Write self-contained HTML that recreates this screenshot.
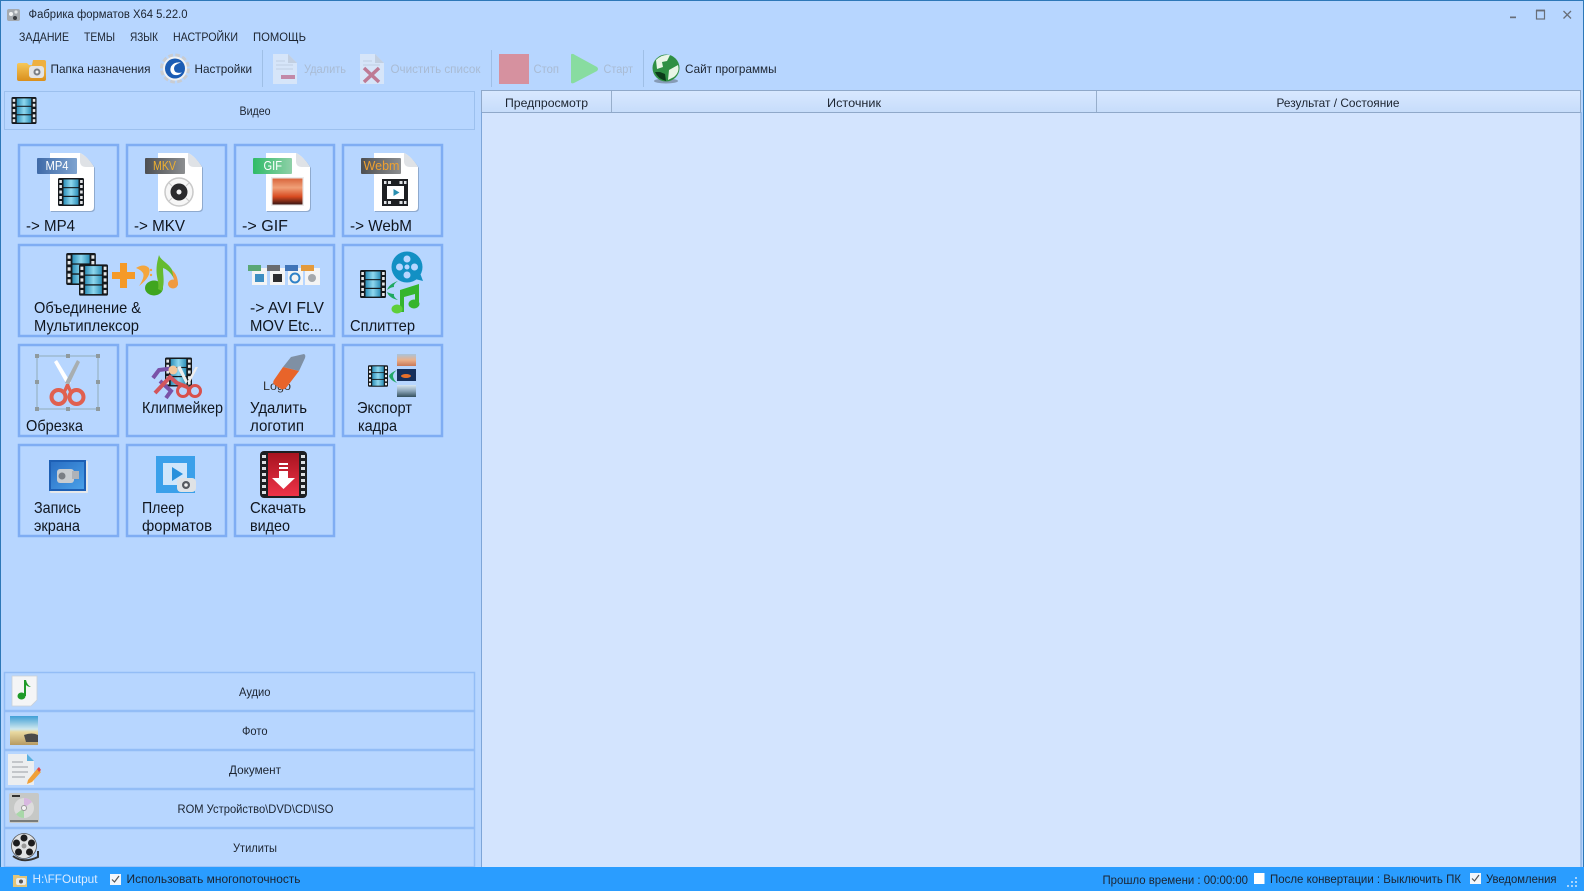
<!DOCTYPE html>
<html lang="ru"><head><meta charset="utf-8"><title>Фабрика форматов</title>
<style>
html,body{margin:0;padding:0;width:1584px;height:891px;overflow:hidden;background:#b7d6ff}
svg{display:block;filter:blur(.3px)}
text{font-family:"Liberation Sans",sans-serif;font-size:12px;fill:#1c2430}
.b{font-size:16px;fill:#10161f}
.g{fill:#a9bbd3}
.tile{fill:none;stroke:#7fadf3;stroke-width:2.5}
.hd{fill:none;stroke:#93bdf6;stroke-width:1.5}
.hv{fill:none;stroke:#9cc0ee;stroke-width:1}
.tg{font-size:12.5px;fill:#fff}
</style></head><body>
<svg width="1584" height="891" viewBox="0 0 1584 891" xmlns="http://www.w3.org/2000/svg">
<defs>
<linearGradient id="fb" x1="0" x2="1" y1="0" y2="0"><stop offset="0" stop-color="#2d8fb8"/><stop offset=".5" stop-color="#8fd8ef"/><stop offset="1" stop-color="#2d8fb8"/></linearGradient>
<linearGradient id="hdr" x1="0" x2="0" y1="0" y2="1"><stop offset="0" stop-color="#d8e8ff"/><stop offset="1" stop-color="#c6dcfa"/></linearGradient>
<linearGradient id="sun" x1="0" x2="0" y1="0" y2="1"><stop offset="0" stop-color="#d9653c"/><stop offset=".35" stop-color="#f0a078"/><stop offset=".7" stop-color="#d84a20"/><stop offset="1" stop-color="#3a1512"/></linearGradient>
<linearGradient id="sky" x1="0" x2="0" y1="0" y2="1"><stop offset="0" stop-color="#3f9fd6"/><stop offset=".45" stop-color="#cfe8ee"/><stop offset=".55" stop-color="#e9d9a0"/><stop offset="1" stop-color="#b69a62"/></linearGradient>
<linearGradient id="blu" x1="0" x2="1"><stop offset="0" stop-color="#3f6aa8"/><stop offset="1" stop-color="#7ea3cf"/></linearGradient>
<linearGradient id="dk" x1="0" x2="1"><stop offset="0" stop-color="#4d4f52"/><stop offset="1" stop-color="#8c8e90"/></linearGradient>
<linearGradient id="grn" x1="0" x2="1"><stop offset="0" stop-color="#2fbb68"/><stop offset="1" stop-color="#8fd0a8"/></linearGradient>
<linearGradient id="fold" x1="0" x2="0" y1="0" y2="1"><stop offset="0" stop-color="#f6c85a"/><stop offset="1" stop-color="#d98f1c"/></linearGradient>
<linearGradient id="redg" x1="0" x2="0" y1="0" y2="1"><stop offset="0" stop-color="#a81420"/><stop offset="1" stop-color="#ee3348"/></linearGradient>
<linearGradient id="pic1" x1="0" x2="0" y1="0" y2="1"><stop offset="0" stop-color="#a8c4dc"/><stop offset=".5" stop-color="#eab08a"/><stop offset="1" stop-color="#c87858"/></linearGradient>
<linearGradient id="pic3" x1="0" x2="0" y1="0" y2="1"><stop offset="0" stop-color="#d6e6f0"/><stop offset=".5" stop-color="#8aa4b8"/><stop offset="1" stop-color="#34505e"/></linearGradient>
<linearGradient id="rec" x1="0" x2="1" y1="0" y2="1"><stop offset="0" stop-color="#2a6fc4"/><stop offset="1" stop-color="#4aa0e8"/></linearGradient>
<symbol id="film" viewBox="0 0 26 28">
<rect width="26" height="28" rx="1.5" fill="#15191d"/>
<rect x="5.5" y="1.5" width="15" height="7.6" fill="url(#fb)"/><rect x="5.5" y="10.2" width="15" height="7.6" fill="url(#fb)"/><rect x="5.5" y="19" width="15" height="7.6" fill="url(#fb)"/>
<g fill="#e6e8ea"><rect x="1.3" y="2" width="2.6" height="3"/><rect x="1.3" y="7" width="2.6" height="3"/><rect x="1.3" y="12.5" width="2.6" height="3"/><rect x="1.3" y="18" width="2.6" height="3"/><rect x="1.3" y="23" width="2.6" height="3"/><rect x="22.1" y="2" width="2.6" height="3"/><rect x="22.1" y="7" width="2.6" height="3"/><rect x="22.1" y="12.5" width="2.6" height="3"/><rect x="22.1" y="18" width="2.6" height="3"/><rect x="22.1" y="23" width="2.6" height="3"/></g>
</symbol>
<symbol id="doc" viewBox="0 0 45 60"><path d="M0 0H30Q37 3 44 14V54Q44 58 40 58H0Z" fill="#6f86a6" opacity=".55" transform="translate(1 1)"/><path d="M0 0H30Q37 3 44 14V54Q44 58 40 58H0Z" fill="#fff"/><path d="M30 0Q37 3 44 14H36Q30 14 30 8Z" fill="#dfe2e6"/></symbol>
</defs>

<!-- window -->
<rect width="1584" height="891" fill="#b7d6ff"/>
<rect x=".5" y=".5" width="1583" height="890" fill="none" stroke="#2d78b8"/>

<!-- title bar -->
<g><rect x="7" y="9" width="13" height="12" rx="2" fill="#a4a9af"/><circle cx="11" cy="14" r="2" fill="#f2f3f4"/><circle cx="16" cy="12" r="1.6" fill="#e4e6e8"/><circle cx="15" cy="18" r="2" fill="#3a3d42"/></g>
<text x="28.5" y="18" textLength="159" lengthAdjust="spacingAndGlyphs" style="font-size:11.5px">Фабрика форматов X64 5.22.0</text>
<path d="M1510 16.5h6v1.7h-6z" fill="#686e78"/>
<rect x="1536.5" y="10.5" width="8" height="8.5" fill="none" stroke="#686e78" stroke-width="1.2"/><path d="M1536 10.5h9" stroke="#686e78" stroke-width="1.8"/>
<path d="M1563.5 11l7.5 7.5m0-7.5l-7.5 7.5" stroke="#686e78" stroke-width="1.3" fill="none"/>

<!-- menu -->
<text x="19" y="41" textLength="50" lengthAdjust="spacingAndGlyphs">ЗАДАНИЕ</text>
<text x="84" y="41" textLength="31" lengthAdjust="spacingAndGlyphs">ТЕМЫ</text>
<text x="130" y="41" textLength="28" lengthAdjust="spacingAndGlyphs">ЯЗЫК</text>
<text x="173" y="41" textLength="65" lengthAdjust="spacingAndGlyphs">НАСТРОЙКИ</text>
<text x="253" y="41" textLength="53" lengthAdjust="spacingAndGlyphs">ПОМОЩЬ</text>

<!-- toolbar -->
<path d="M17 65q0-2 2-2h8l2 2h15q2 0 2 2v12q0 2-2 2H19q-2 0-2-2z" fill="url(#fold)"/><path d="M33 60h11q2 0 2 2v8H31z" fill="#eeb040"/>
<rect x="29" y="66" width="15" height="12" rx="3" fill="#e2e4e6"/><circle cx="37" cy="72" r="3.500" fill="#7a7e84"/><circle cx="37" cy="72" r="1.500" fill="#f4f4f4"/>
<text x="50.500" y="73" textLength="100" lengthAdjust="spacingAndGlyphs">Папка назначения</text>
<g transform="translate(175 68.500)"><circle r="13" fill="none" stroke="#c8ccd2" stroke-width="4" stroke-dasharray="4.500 2.300"/><circle r="12" fill="#f0f2f4"/><circle r="10" fill="#1b5cb4"/><path d="M6-6A8.500 8.500 0 1 0 7 4Q3 7-1 5-5 2-3-3-1-7 6-6z" fill="#1b5cb4"/><path d="M6-6Q-1-7-4-2-6 3-2 6 3 8 7 4 2 5 0 3-2 0 0-3 2-5 6-6z" fill="#fff"/></g>
<text x="194.500" y="73" textLength="57.500" lengthAdjust="spacingAndGlyphs">Настройки</text>
<path d="M262.500 50v37" stroke="#9fbfe6"/>
<g opacity=".65"><path d="M273 54h15l9 9v21h-24z" fill="#e8eef6"/><path d="M288 54v9h9z" fill="#c8ccd2"/><path d="M276 61h9M276 65h17M276 69h17" stroke="#c6ccd4"/><rect x="281" y="75" width="14" height="4" fill="#c8607a"/></g>
<text x="304" y="73" textLength="42" lengthAdjust="spacingAndGlyphs" class="g">Удалить</text>
<g opacity=".65"><path d="M360 54h15l9 9v21h-24z" fill="#e8eef6"/><path d="M375 54v9h9z" fill="#c8ccd2"/><path d="M363 61h9M363 65h17" stroke="#c6ccd4"/><path d="M364 68l15 14m0-14l-15 14" stroke="#c2495c" stroke-width="3.500"/></g>
<text x="390.500" y="73" textLength="90" lengthAdjust="spacingAndGlyphs" class="g">Очистить список</text>
<path d="M491.500 50v37" stroke="#9fbfe6"/>
<rect x="499" y="54" width="30" height="30" fill="#d6919f"/>
<text x="533.500" y="73" textLength="25.500" lengthAdjust="spacingAndGlyphs" class="g">Стоп</text>
<path d="M572 54q-1-.5-1 2v26q0 2 3 1l23-12q2-2 0-4L575 55q-2-1.500-3-1z" fill="#88dca0"/>
<text x="603.500" y="73" textLength="29.500" lengthAdjust="spacingAndGlyphs" class="g">Старт</text>
<path d="M643.500 50v37" stroke="#9fbfe6"/>
<ellipse cx="666" cy="81" rx="12" ry="2.500" fill="#55606e" opacity=".5"/>
<circle cx="666" cy="68" r="13.500" fill="#2f8f44"/><path d="M656 60q6-6 14-5l-3 6-5 1 1 5-6 2zM669 70l9-5q2 7-4 12l-6 3z" fill="#e8f5e6"/><path d="M655 72q3 7 11 9l-1-7-5-2z" fill="#0c3a1a"/>
<text x="685" y="73" textLength="91.500" lengthAdjust="spacingAndGlyphs">Сайт программы</text>

<!-- left panel headers -->
<rect x="4.500" y="91.500" width="470" height="38" class="hv"/>
<use href="#film" x="11" y="97" width="26" height="27"/>
<text x="239.500" y="115" textLength="31" lengthAdjust="spacingAndGlyphs">Видео</text>

<!-- tiles -->
<rect x="19" y="145" width="99" height="91" class="tile"/><rect x="127" y="145" width="99" height="91" class="tile"/><rect x="235" y="145" width="99" height="91" class="tile"/><rect x="343" y="145" width="99" height="91" class="tile"/>
<rect x="19" y="245" width="207" height="91" class="tile"/><rect x="235" y="245" width="99" height="91" class="tile"/><rect x="343" y="245" width="99" height="91" class="tile"/>
<rect x="19" y="345" width="99" height="91" class="tile"/><rect x="127" y="345" width="99" height="91" class="tile"/><rect x="235" y="345" width="99" height="91" class="tile"/><rect x="343" y="345" width="99" height="91" class="tile"/>
<rect x="19" y="445" width="99" height="91" class="tile"/><rect x="127" y="445" width="99" height="91" class="tile"/><rect x="235" y="445" width="99" height="91" class="tile"/>

<!-- MP4 -->
<use href="#doc" x="50" y="153" width="45" height="60"/>
<rect x="37" y="158" width="40" height="16" rx="1" fill="url(#blu)"/><text x="45.500" y="170" class="tg" textLength="23" lengthAdjust="spacingAndGlyphs">MP4</text>
<use href="#film" x="58" y="178" width="26" height="28"/>
<text x="26" y="231" class="b" textLength="49" lengthAdjust="spacingAndGlyphs">-&gt; MP4</text>
<!-- MKV -->
<use href="#doc" x="158" y="153" width="45" height="60"/>
<rect x="145" y="158" width="40" height="16" rx="1" fill="url(#dk)"/><text x="153" y="170" class="tg" style="fill:#eeb030" textLength="23" lengthAdjust="spacingAndGlyphs">MKV</text>
<circle cx="179" cy="192" r="14" fill="#f6f6f6" stroke="#c9c9c9" stroke-width="1.500"/><circle cx="179" cy="192" r="8.500" fill="#2a2a2c"/><circle cx="179" cy="192" r="2.500" fill="#f2f2f2"/><path d="M169 183l3 3M189 183l-3 3M169 201l3-3M189 201l-3-3" stroke="#c9c9c9"/>
<text x="134" y="231" class="b" textLength="51" lengthAdjust="spacingAndGlyphs">-&gt; MKV</text>
<!-- GIF -->
<use href="#doc" x="266" y="153" width="45" height="60"/>
<rect x="253" y="158" width="39" height="16" rx="1" fill="url(#grn)"/><text x="263.500" y="170" class="tg" textLength="18.500" lengthAdjust="spacingAndGlyphs">GIF</text>
<rect x="271" y="177" width="33" height="29" fill="#ececec"/><rect x="272.500" y="178.500" width="30" height="26" fill="url(#sun)"/>
<text x="242" y="231" class="b" textLength="46" lengthAdjust="spacingAndGlyphs">-&gt; GIF</text>
<!-- WebM -->
<use href="#doc" x="374" y="153" width="45" height="60"/>
<rect x="361" y="158" width="40" height="16" rx="1" fill="url(#dk)"/><text x="363.500" y="170" class="tg" style="fill:#eea030" textLength="36" lengthAdjust="spacingAndGlyphs">Webm</text>
<path d="M382 179h26v27h-26z" fill="#1d1f22"/><rect x="387" y="186" width="17" height="13" fill="#fff"/><path d="M393.500 189l6 3.500-6 3.500z" fill="#2a8fb0"/><path d="M384 181h2.500v3H384zM404 181h2.500v3H404zM384 201h2.500v3H384zM404 201h2.500v3H404zM388 181h3v3h-3zM399.500 181h3v3h-3zM388 201h3v3h-3zM399.500 201h3v3h-3z" fill="#dfe2e5"/>
<text x="350" y="231" class="b" textLength="62" lengthAdjust="spacingAndGlyphs">-&gt; WebM</text>

<!-- Merge -->
<use href="#film" x="66" y="253" width="30" height="32"/>
<use href="#film" x="79" y="264" width="29" height="32"/>
<path d="M120 263h7v9h8v7h-8v9h-7v-9h-8v-7h8z" fill="#f59a28"/>
<path d="M136 268q8-5 13 0 3 8-10 18 6-9 4-13-2-3-7-5z" fill="#f4a63e"/><circle cx="151" cy="270" r="1.200" fill="#f4a63e"/><circle cx="151" cy="275" r="1.200" fill="#f4a63e"/>
<ellipse cx="154" cy="288" rx="9" ry="7.500" fill="#3fa51f"/><path d="M158 289c2-9-5-14 1-34 2 7 16 10 15 24-3-7-8-10-11-11 0 8 2 14-1 23z" fill="#65bb30"/>
<ellipse cx="173" cy="284" rx="5" ry="4.500" fill="#f09a40"/><path d="M175 285l-3-15q6 5 6 15z" fill="#f09a40"/>
<text x="34" y="313" class="b" textLength="107" lengthAdjust="spacingAndGlyphs">Объединение &amp;</text>
<text x="34" y="331" class="b" textLength="105" lengthAdjust="spacingAndGlyphs">Мультиплексор</text>

<!-- AVI etc -->
<g>
<rect x="252" y="268" width="15" height="17" fill="#f4f4f4"/><rect x="248" y="265" width="13" height="6" fill="#5aa776"/><rect x="255" y="274" width="9" height="8" fill="#3d8ec2"/>
<rect x="270" y="268" width="15" height="17" fill="#f4f4f4"/><rect x="267" y="265" width="13" height="6" fill="#6a6c70"/><rect x="273" y="274" width="9" height="8" fill="#2c2c2e"/>
<rect x="288" y="268" width="15" height="17" fill="#f4f4f4"/><rect x="285" y="265" width="13" height="6" fill="#3f74b8"/><circle cx="295" cy="278" r="4.500" fill="none" stroke="#2f82c8" stroke-width="2"/>
<rect x="305" y="268" width="15" height="17" fill="#f4f4f4"/><rect x="301" y="265" width="13" height="6" fill="#e39a3c"/><circle cx="312" cy="278" r="4" fill="#a4a8ac"/>
</g>
<text x="250" y="313" class="b" textLength="74" lengthAdjust="spacingAndGlyphs">-&gt; AVI FLV</text>
<text x="250" y="331" class="b" textLength="72" lengthAdjust="spacingAndGlyphs">MOV Etc...</text>

<!-- Splitter -->
<use href="#film" x="360" y="270" width="26" height="28"/>
<path d="M398 281q-9 3-11 9 4-3 7-3-1-3 4-6zM398 300q-9-2-11-8 4 2 7 2-1 3 4 6z" fill="#1fa860"/>
<circle cx="407" cy="267" r="15.500" fill="#1290c4"/><path d="M415 279l8 2-3-8z" fill="#1290c4"/><g fill="#b7d6ff"><circle cx="407" cy="267" r="2.500"/><circle cx="407" cy="259" r="3.500"/><circle cx="407" cy="275" r="3.500"/><circle cx="399.500" cy="267" r="3.500"/><circle cx="414.500" cy="267" r="3.500"/></g>
<path d="M400 290l19-6v22h-4v-12l-11 3v15h-4z" fill="#35b52d"/><ellipse cx="397" cy="309" rx="5.500" ry="4.500" fill="#5fcf3a"/><ellipse cx="414" cy="304" rx="5.500" ry="4.500" fill="#35b52d"/>
<text x="350" y="331" class="b" textLength="65" lengthAdjust="spacingAndGlyphs">Сплиттер</text>

<!-- Crop -->
<rect x="37" y="356" width="61" height="53" fill="none" stroke="#92acb8" stroke-width="1"/>
<g fill="#8f9a9e"><rect x="35" y="354" width="4" height="4"/><rect x="66" y="354" width="4" height="4"/><rect x="96" y="354" width="4" height="4"/><rect x="35" y="380" width="4" height="4"/><rect x="96" y="380" width="4" height="4"/><rect x="35" y="407" width="4" height="4"/><rect x="66" y="407" width="4" height="4"/><rect x="96" y="407" width="4" height="4"/></g>
<path d="M54 362l13 23 4-2-14-23z" fill="#fff"/><path d="M80 362l-11 23-4-2 12-23z" fill="#a8aeb0"/>
<circle cx="58.500" cy="397" r="7" fill="none" stroke="#e0604f" stroke-width="4"/><circle cx="76.500" cy="397" r="7" fill="none" stroke="#e0604f" stroke-width="4"/><path d="M63 391l3-7 3 0 3 7-3 1-1.500-3-1.500 3z" fill="#e0604f"/>
<text x="26" y="431" class="b" textLength="57" lengthAdjust="spacingAndGlyphs">Обрезка</text>

<!-- Clipmaker -->
<use href="#film" x="165" y="356" width="27" height="32"/>
<path d="M175 368l-16 2-6 8" fill="none" stroke="#7a52a8" stroke-width="4"/><path d="M160 381l11 10-5 7" fill="none" stroke="#7a52a8" stroke-width="4"/>
<path d="M155 393l15-16 7 6 10 4" fill="none" stroke="#d2555c" stroke-width="4"/>
<circle cx="173" cy="370" r="4.500" fill="#f4c79a"/><path d="M177 367l10 19 2.500-1-9-19zM198 367l-10 19-2.500-1 10-18z" fill="#eee"/>
<circle cx="183" cy="391" r="5.500" fill="none" stroke="#d8504c" stroke-width="3"/><circle cx="195" cy="391" r="5.500" fill="none" stroke="#d8504c" stroke-width="3"/>
<text x="142" y="413" class="b" textLength="81" lengthAdjust="spacingAndGlyphs">Клипмейкер</text>

<!-- Logo eraser -->
<text x="263" y="390" style="font-size:12px;fill:#333" textLength="28" lengthAdjust="spacingAndGlyphs">Logo</text>
<path d="M291 357L304 354Q306 355 305 358L299 371 283 367z" fill="#7f90a4"/><path d="M283 367L299 371 286 388Q284 390 281 389L275 385Q272 383 274 380z" fill="#e8642a"/>
<text x="250" y="413" class="b" textLength="57" lengthAdjust="spacingAndGlyphs">Удалить</text>
<text x="250" y="431" class="b" textLength="54" lengthAdjust="spacingAndGlyphs">логотип</text>

<!-- Export -->
<use href="#film" x="368" y="365" width="20" height="22"/>
<path d="M397 370q-7 3-8 6 1 4 8 7-4-4-4-7 0-3 4-6z" fill="#22a868"/>
<rect x="397" y="354" width="19" height="12" fill="url(#pic1)"/>
<rect x="397" y="369" width="19" height="12" fill="#16305c"/><ellipse cx="406" cy="376" rx="5" ry="2" fill="#e8702a"/>
<rect x="397" y="385" width="19" height="12" fill="url(#pic3)"/>
<text x="357" y="413" class="b" textLength="55" lengthAdjust="spacingAndGlyphs">Экспорт</text>
<text x="358" y="431" class="b" textLength="39" lengthAdjust="spacingAndGlyphs">кадра</text>

<!-- Record -->
<rect x="50" y="461" width="38" height="32" rx="1" fill="#e6e8ea"/><rect x="49" y="460" width="37" height="31" fill="#1d5fb4"/><rect x="51" y="462" width="33" height="27" fill="url(#rec)"/>
<rect x="57" y="469" width="17" height="14" rx="3" fill="#c8ccd0"/><circle cx="62" cy="476" r="3.500" fill="#7a7e84"/><rect x="72" y="471" width="7" height="8" fill="#aeb2b8"/>
<text x="34" y="513" class="b" textLength="47" lengthAdjust="spacingAndGlyphs">Запись</text>
<text x="34" y="531" class="b" textLength="46" lengthAdjust="spacingAndGlyphs">экрана</text>

<!-- Player -->
<rect x="156" y="456" width="39" height="37" fill="#3aa0ea"/><rect x="163" y="463" width="24" height="22" fill="#cfe6fb"/><path d="M172 467l11 7-11 7z" fill="#2890dc"/>
<rect x="177" y="478" width="19" height="14" rx="4" fill="#dfe2e5"/><circle cx="186" cy="485" r="4" fill="#555a60"/><circle cx="186" cy="485" r="1.800" fill="#f0f0f0"/>
<text x="142" y="513" class="b" textLength="42" lengthAdjust="spacingAndGlyphs">Плеер</text>
<text x="142" y="531" class="b" textLength="70" lengthAdjust="spacingAndGlyphs">форматов</text>

<!-- Download -->
<rect x="260" y="451" width="47" height="47" rx="4" fill="#1d1f22"/><rect x="268" y="453" width="31" height="43" fill="url(#redg)"/>
<g fill="#dcdfe2"><rect x="262" y="455" width="4" height="3"/><rect x="262" y="461" width="4" height="3"/><rect x="262" y="467" width="4" height="3"/><rect x="262" y="473" width="4" height="3"/><rect x="262" y="479" width="4" height="3"/><rect x="262" y="485" width="4" height="3"/><rect x="262" y="491" width="4" height="3"/><rect x="301" y="455" width="4" height="3"/><rect x="301" y="461" width="4" height="3"/><rect x="301" y="467" width="4" height="3"/><rect x="301" y="473" width="4" height="3"/><rect x="301" y="479" width="4" height="3"/><rect x="301" y="485" width="4" height="3"/><rect x="301" y="491" width="4" height="3"/></g>
<path d="M279 463h9v2h-9zM279 467h9v2h-9zM279 471h9v7h7l-11.500 11L272 478h7z" fill="#fff"/>
<text x="250" y="513" class="b" textLength="56" lengthAdjust="spacingAndGlyphs">Скачать</text>
<text x="250" y="531" class="b" textLength="40" lengthAdjust="spacingAndGlyphs">видео</text>

<!-- bottom sections -->
<rect x="4.500" y="672.500" width="470" height="38" class="hd"/>
<rect x="4.500" y="711.500" width="470" height="38" class="hd"/>
<rect x="4.500" y="750.500" width="470" height="38" class="hd"/>
<rect x="4.500" y="789.500" width="470" height="38" class="hd"/>
<rect x="4.500" y="828.500" width="470" height="38.500" class="hd"/>

<path d="M12 676h25v24l-6 6H12z" fill="#f4f5f6" stroke="#c9d0d8" stroke-width=".8"/>
<ellipse cx="21.500" cy="696" rx="4" ry="3.500" fill="#1e9a28"/><path d="M24 696v-16h2q1 5 5 7-3 0-5-2v11z" fill="#1e9a28"/>
<text x="239" y="696" textLength="31.500" lengthAdjust="spacingAndGlyphs">Аудио</text>

<rect x="10" y="716" width="28" height="29" fill="url(#sky)"/><path d="M24 735q8-3 14 0v7H26z" fill="#4a4a48"/>
<text x="242" y="735" textLength="25.500" lengthAdjust="spacingAndGlyphs">Фото</text>

<path d="M8 754h19l7 7v24H8z" fill="#eceef0"/><path d="M27 754l7 7h-7z" fill="#5ab0e0"/><path d="M12 762h11M12 767h16M12 772h16M12 777h13" stroke="#9a9ea4"/>
<path d="M28 780l9-11 4 3-9 10-5 2z" fill="#f0a038"/><path d="M37 769l2-2 2 3-2 2z" fill="#e04848"/>
<text x="229" y="774" textLength="52" lengthAdjust="spacingAndGlyphs">Документ</text>

<rect x="9" y="793" width="30" height="30" rx="2" fill="#c6c8c6"/><rect x="12" y="795" width="8" height="2" fill="#333"/><circle cx="24" cy="808" r="10" fill="#dcdcdc"/><path d="M24 798a10 10 0 0 1 8 4l-8 6z" fill="#d8b8e0"/><path d="M24 818a10 10 0 0 1-8-4l8-6z" fill="#a8d8a8"/><circle cx="24" cy="808" r="2.500" fill="#f4f4f4" stroke="#999"/>
<rect x="10" y="820" width="28" height="2" fill="#7a7c7a"/>
<text x="177.500" y="813" textLength="156" lengthAdjust="spacingAndGlyphs">ROM Устройство\DVD\CD\ISO</text>

<circle cx="24" cy="846" r="12.500" fill="#e0e2e4" stroke="#555" stroke-width=".8"/><g fill="#1c1c1e"><circle cx="24" cy="838" r="3.500"/><circle cx="31.500" cy="843" r="3.500"/><circle cx="29.500" cy="852" r="3.500"/><circle cx="18.500" cy="852" r="3.500"/><circle cx="16.500" cy="843" r="3.500"/></g><circle cx="24" cy="846" r="2.500" fill="#999"/><path d="M13 856q10 8 25 1v-6" fill="none" stroke="#333" stroke-width="2"/>
<text x="233" y="852" textLength="44" lengthAdjust="spacingAndGlyphs">Утилиты</text>

<!-- right list -->
<rect x="481" y="112" width="1100" height="755" fill="#d3e4fe"/>
<rect x="481.500" y="90.500" width="1099" height="22" fill="url(#hdr)" stroke="#8fa8c9"/>
<path d="M481.500 112v755M1581 112v755" stroke="#7da5d8"/>
<path d="M611.500 91v21M1096.500 91v21" stroke="#97aecb"/>
<text x="505" y="107" textLength="83" lengthAdjust="spacingAndGlyphs">Предпросмотр</text>
<text x="827" y="107" textLength="54" lengthAdjust="spacingAndGlyphs">Источник</text>
<text x="1276.500" y="107" textLength="123" lengthAdjust="spacingAndGlyphs">Результат / Состояние</text>

<!-- status bar -->
<rect x="0" y="867" width="1584" height="24" fill="#2a9dff"/>
<path d="M13 875h6l1 1h7v11H13z" fill="#e2c57a"/><rect x="16" y="878" width="10" height="7" rx="2" fill="#e8eaec"/><circle cx="21" cy="881.500" r="2" fill="#555"/>
<text x="32.500" y="883" textLength="65" lengthAdjust="spacingAndGlyphs" style="fill:#dcecff">H:\FFOutput</text>
<rect x="110" y="874" width="11" height="11" fill="#f2f6fb"/><path d="M112 879.500l2.500 2.500 4.500-6" fill="none" stroke="#555" stroke-width="1.200"/>
<text x="126.500" y="883" textLength="174" lengthAdjust="spacingAndGlyphs">Использовать многопоточность</text>
<text x="1102.500" y="884" textLength="145.500" lengthAdjust="spacingAndGlyphs">Прошло времени : 00:00:00</text>
<rect x="1254" y="873" width="10.500" height="11" fill="#fff"/>
<text x="1270" y="883" textLength="191" lengthAdjust="spacingAndGlyphs">После конвертации : Выключить ПК</text>
<rect x="1470" y="873" width="11" height="11" fill="#f2f6fb"/><path d="M1472 878.500l2.500 2.500 4.500-6" fill="none" stroke="#555" stroke-width="1.200"/>
<text x="1486" y="883" textLength="70.500" lengthAdjust="spacingAndGlyphs">Уведомления</text>
<g fill="#a9d4fb"><rect x="1575" y="877" width="2" height="2"/><rect x="1571" y="881" width="2" height="2"/><rect x="1575" y="881" width="2" height="2"/><rect x="1567" y="885" width="2" height="2"/><rect x="1571" y="885" width="2" height="2"/><rect x="1575" y="885" width="2" height="2"/></g>
</svg>
</body></html>
